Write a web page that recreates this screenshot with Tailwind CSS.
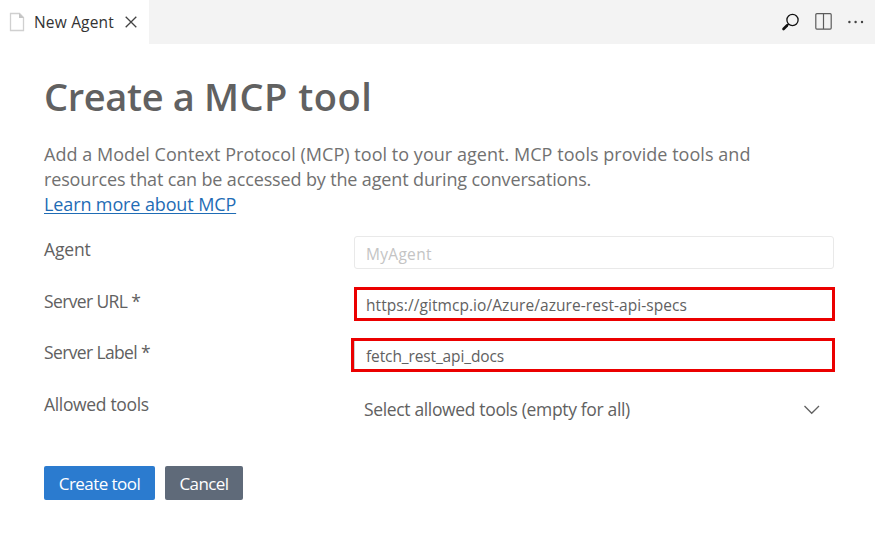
<!DOCTYPE html>
<html lang="en">
<head>
<meta charset="utf-8">
<title>New Agent</title>
<script src="https://cdn.jsdelivr.net/npm/@tailwindcss/browser@4"></script>
</head>
<body class="w-[875px] h-[559px] overflow-hidden bg-white font-['Open_Sans','Noto_Sans',sans-serif] text-[#616161]">
<header class="flex h-11 bg-[#f3f3f3] justify-between">
  <div class="flex items-center w-[149px] bg-white pl-[9px] text-[#333]">
    <svg class="w-4 h-5 shrink-0" viewBox="0 0 16 20" fill="none"><path d="M1.5 1.5H10.5L14.5 5.5V18.5H1.5Z" stroke="#d0d0d0" stroke-width="1.3"/><path d="M10 1V6H15Z" fill="#c5c5c5"/></svg>
    <span class="ml-[9px] pt-[2px] text-[15.5px] tracking-[0.18px] whitespace-nowrap w-20">New Agent</span>
    <svg class="ml-[11px] w-3 h-3 shrink-0" viewBox="0 0 12 12" fill="none" stroke="#424242" stroke-width="1.3"><path d="M.7 .7L11.3 11.3M11.3 .7L.7 11.3"/></svg>
  </div>
  <div class="flex items-center pr-[11px]">
    <svg class="w-[18px] h-[18px]" viewBox="0 0 18 18" fill="none" stroke="#111"><circle cx="11.5" cy="7" r="5.6" stroke-width="1.3"/><path d="M7.5 11L5.5 13" stroke-width="1.6"/><path d="M6 12.5L2.5 16" stroke-width="2.6" stroke-linecap="round"/></svg>
    <svg class="ml-4 mb-[2px] w-[17px] h-[17px]" viewBox="0 0 17 17" fill="none" stroke="#5c5c5c" stroke-width="1.2"><rect x=".8" y=".7" width="15.4" height="15.4" rx="1"/><path d="M8.5 1V16"/></svg>
    <svg class="ml-4 w-4 h-4" viewBox="0 0 16 16" fill="#424242"><circle cx="1.4" cy="8" r="1.2"/><circle cx="7.6" cy="8" r="1.2"/><circle cx="14" cy="8" r="1.2"/></svg>
  </div>
</header>
<main class="pl-11 pt-[27px] whitespace-nowrap">
  <h1 class="h-[51px] leading-[51px] text-[38px] font-semibold"><span class="tracking-[-0.35px]">Create a </span><span class="tracking-[0.5px]">MCP tool</span></h1>
  <div class="mt-5 text-[18px] leading-[25px] text-[#717171] h-[75px]">
    <p class="tracking-[0.04px]">Add a Model Context Protocol (MCP) tool to your agent. MCP tools provide tools and</p>
    <p class="tracking-[-0.14px]">resources that can be accessed by the agent during conversations.</p>
    <a class="block w-fit tracking-[-0.12px] text-[#1f6cb5] underline decoration-1 underline-offset-2">Learn more about MCP</a>
  </div>
  <form class="mt-[19px] text-[17.5px]">
    <div class="flex h-[51px]">
      <label class="w-[310px] leading-[27px] tracking-[-0.15px]">Agent</label>
      <div class="w-[480px] h-[33px] border border-[#e9e9e9] rounded-[3px] pl-[11px] text-[15.5px] leading-[34px] tracking-[0.3px] text-[#c4c4c4]">MyAgent</div>
    </div>
    <div class="flex h-[51px]">
      <label class="w-[310px] leading-[29px] tracking-[-0.63px]">Server URL *</label>
      <div class="w-[481px] h-[34px] border-3 border-[#eb0000] pl-[9px] text-[15.5px] leading-[30px]"><span class="tracking-[0.07px]">https://gitmcp.io/Azure/azure-rest-api-specs</span></div>
    </div>
    <div class="flex h-[51px]">
      <label class="w-[307px] leading-[29px] tracking-[-0.63px]">Server Label *</label>
      <div class="w-[484px] h-[34px] border-3 border-[#eb0000] text-[15.5px] leading-[30px]"><span class="block h-full border-l border-[#cecece] pl-[11px] tracking-[-0.12px]">fetch_rest_api_docs</span></div>
    </div>
    <div class="flex h-[77px]">
      <label class="w-[310px] leading-[30px] tracking-[-0.33px]">Allowed tools</label>
      <div class="w-[480px] h-[41px] pl-[10px] pr-[14px] flex items-center justify-between"><span class="tracking-[-0.35px]">Select allowed tools (empty for all)</span>
        <svg class="w-4 h-[10px]" viewBox="0 0 16 10" fill="none" stroke="#616161" stroke-width="1.3"><path d="M.5 1L7.7 8.3L15 1"/></svg>
      </div>
    </div>
    <div class="flex gap-[10px] text-white text-[17px]">
      <button type="button" class="w-[111px] h-[34px] pt-[2px] rounded-[2px] bg-[#2b7bcf] tracking-[-0.55px]">Create tool</button>
      <button type="button" class="w-[78px] h-[34px] pt-[2px] rounded-[2px] bg-[#5f6a79] tracking-[-0.6px]">Cancel</button>
    </div>
  </form>
</main>
</body>
</html>
